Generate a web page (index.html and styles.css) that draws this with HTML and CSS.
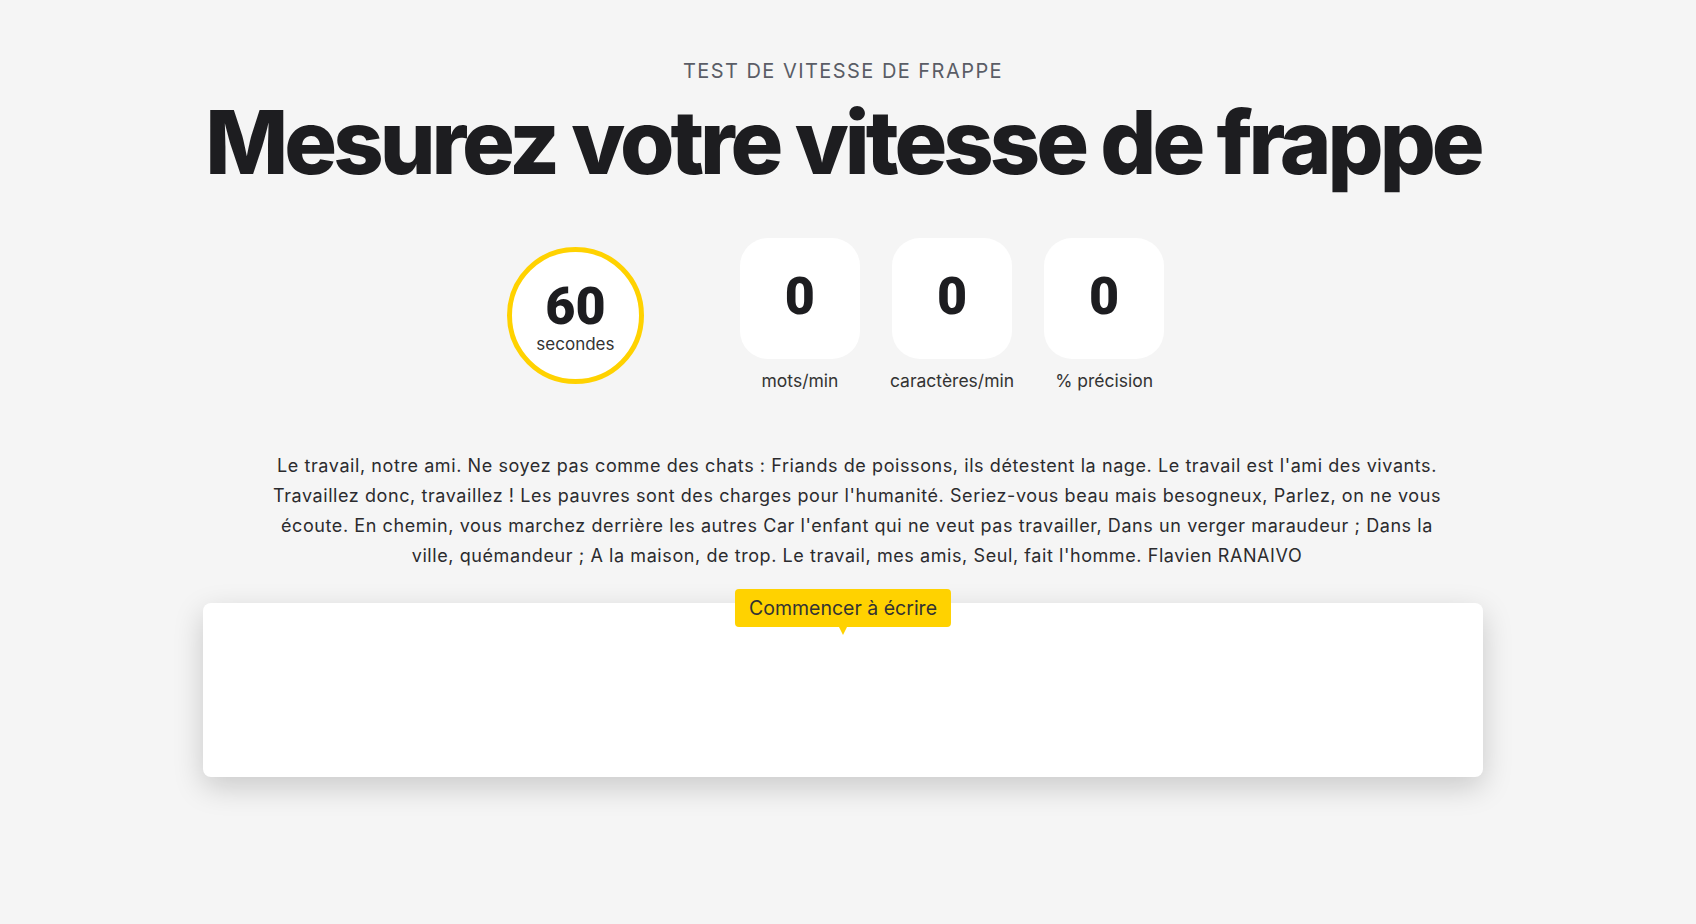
FILE: index.html
```html
<!DOCTYPE html>
<html lang="fr">
<head>
<meta charset="utf-8">
<title>Test de vitesse de frappe</title>
<link rel="stylesheet" href="styles.css">
</head>
<body>
<main class="page">
  <header class="intro">
    <p class="eyebrow">TEST DE VITESSE DE FRAPPE</p>
    <h1 class="title">Mesurez votre vitesse de frappe</h1>
  </header>

  <section class="stats">
    <div class="timer">
      <span class="timer-value">60</span>
      <span class="timer-unit">secondes</span>
    </div>
    <div class="stat-list">
      <div class="stat">
        <div class="stat-box">0</div>
        <div class="stat-label">mots/min</div>
      </div>
      <div class="stat">
        <div class="stat-box">0</div>
        <div class="stat-label">caractères/min</div>
      </div>
      <div class="stat">
        <div class="stat-box">0</div>
        <div class="stat-label">% précision</div>
      </div>
    </div>
  </section>

  <p class="passage">Le travail, notre ami. Ne soyez pas comme des chats : Friands de poissons, ils détestent la nage. Le travail est l'ami des vivants. Travaillez donc, travaillez ! Les pauvres sont des charges pour l'humanité. Seriez-vous beau mais besogneux, Parlez, on ne vous écoute. En chemin, vous marchez derrière les autres Car l'enfant qui ne veut pas travailler, Dans un verger maraudeur ; Dans la ville, quémandeur ; A la maison, de trop. Le travail, mes amis, Seul, fait l'homme. Flavien RANAIVO</p>

  <div class="input-wrap">
    <div class="tooltip">Commencer à écrire</div>
    <div class="input-box"></div>
  </div>
</main>
</body>
</html>
```

FILE: styles.css
```css
* { box-sizing: border-box; }

html, body {
  margin: 0;
  padding: 0;
  background: #f5f5f5;
}

body {
  font-family: Inter, "Liberation Sans", sans-serif;
  color: #1d1d20;
  padding-right: 10px;
}

.page {
  width: 1280px;
  margin: 0 auto;
  padding-top: 59px;
  padding-bottom: 100px;
  display: flex;
  flex-direction: column;
  align-items: center;
}

.intro {
  text-align: center;
}

.eyebrow {
  margin: 0;
  font-size: 20px;
  line-height: 24px;
  font-weight: 400;
  letter-spacing: 1.45px;
  color: #5a5d66;
}

.title {
  margin: 4px 0 0;
  font-size: 88px;
  line-height: 110px;
  font-weight: 800;
  letter-spacing: -4px;
  white-space: nowrap;
  color: #1d1d20;
}

.stats {
  margin-top: 41px;
  display: flex;
  align-items: center;
  padding-right: 15px;
}

.timer {
  width: 137px;
  height: 137px;
  border-radius: 50%;
  border: 5px solid #ffd200;
  background: #fff;
  display: flex;
  flex-direction: column;
  align-items: center;
  justify-content: center;
  margin-right: 96px;
  margin-top: 2px;
}

.timer-value {
  font-family: Roboto, sans-serif;
  font-weight: 900;
  font-size: 52px;
  line-height: 50px;
  margin-top: 4px;
}

.timer-unit {
  font-size: 17px;
  line-height: 20px;
  color: #333;
  margin-top: 2px;
}

.stat-list {
  display: flex;
  gap: 30px;
}

.stat {
  display: flex;
  flex-direction: column;
  align-items: center;
}

.stat-box {
  width: 120px;
  height: 121px;
  border-radius: 28px;
  background: #fff;
  display: flex;
  align-items: center;
  justify-content: center;
  font-family: Roboto, sans-serif;
  font-weight: 900;
  font-size: 52px;
  padding-bottom: 4px;
}

.stat-label {
  margin-top: 12px;
  font-size: 17.5px;
  line-height: 20px;
  color: #333;
  white-space: nowrap;
}

.passage {
  margin: 60px 0 0;
  width: 1218px;
  text-align: center;
  font-size: 18px;
  letter-spacing: 0.58px;
  line-height: 30px;
  color: #2b2b2e;
  padding-left: 28px;
}

.input-wrap {
  position: relative;
  width: 1280px;
  margin-top: 32px;
}

.input-box {
  height: 174px;
  background: #fff;
  border-radius: 8px;
  box-shadow: 0 10px 30px rgba(0, 0, 0, 0.18);
}

.tooltip {
  position: absolute;
  left: 50%;
  top: -14px;
  transform: translateX(-50%);
  background: #ffd200;
  color: #333;
  font-size: 19.5px;
  line-height: 38px;
  height: 38px;
  padding: 0 14px;
  border-radius: 4px;
  white-space: nowrap;
  z-index: 1;
}

.tooltip::after {
  content: "";
  position: absolute;
  left: 50%;
  bottom: -8px;
  margin-left: -4px;
  border-left: 4px solid transparent;
  border-right: 4px solid transparent;
  border-top: 8px solid #ffd200;
}
```
